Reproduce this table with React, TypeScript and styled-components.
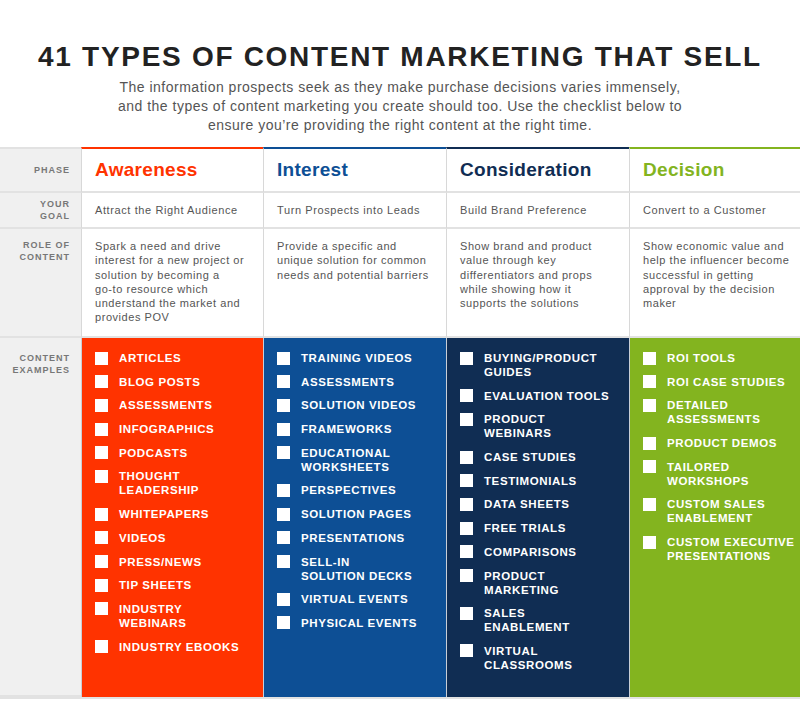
import React from 'react';
import styled, { createGlobalStyle } from 'styled-components';

const GlobalStyle = createGlobalStyle`
  html, body {
    margin: 0;
    padding: 0;
    background: #fff;
  }
  body {
    font-family: 'Liberation Sans', Arial, sans-serif;
  }
`;

// Page header

const Page = styled.div`
  width: 800px;
  height: 725px;
  overflow: hidden;
  background: #fff;
`;

const Title = styled.h1`
  margin: 0;
  padding-top: 40px;
  text-align: center;
  font-size: 28px;
  line-height: 34px;
  font-weight: 700;
  letter-spacing: 1.7px;
  color: #222;
`;

const Intro = styled.p`
  margin: 4px 0 0;
  text-align: center;
  font-size: 14px;
  line-height: 19px;
  letter-spacing: 0.5px;
  color: #555;
`;

// Table

const Table = styled.div`
  margin-top: 12px;
  display: grid;
  grid-template-columns: 81px 182px 183px 183px 1fr;
  grid-template-rows: 44px 36px 109px 359px;
  border-top: 2px solid #e2e2e2;
  border-bottom: 2px solid #e2e2e2;
`;

const Label = styled.div<{ $top?: number; $center?: boolean }>`
  background: #f0f0f0;
  border-bottom: 2px solid #e2e2e2;
  padding: ${(p) => (p.$top ?? 0)}px 11px 0 0;
  display: flex;
  flex-direction: column;
  justify-content: ${(p) => (p.$center ? 'center' : 'flex-start')};
  align-items: flex-end;
  text-align: right;
  font-size: 9px;
  line-height: 12px;
  font-weight: 700;
  letter-spacing: 1px;
  color: #777;
  &:last-of-type {
    border-bottom: none;
  }
`;

const Cell = styled.div`
  border-left: 1px solid #d8d8d8;
  border-bottom: 2px solid #e2e2e2;
  background: #fff;
`;

const PhaseCell = styled(Cell)<{ $color: string }>`
  border-top: 2px solid ${(p) => p.$color};
  margin-top: -2px;
  display: flex;
  align-items: center;
  padding-left: 13px;
  font-size: 19px;
  font-weight: 700;
  letter-spacing: 0.3px;
  color: ${(p) => p.$color};
`;

const GoalCell = styled(Cell)`
  display: flex;
  align-items: center;
  padding-left: 13px;
  font-size: 11px;
  color: #555;
  letter-spacing: 0.6px;
`;

const RoleCell = styled(Cell)`
  padding: 10px 0 0 13px;
  font-size: 11px;
  line-height: 14.3px;
  color: #555;
  letter-spacing: 0.55px;
`;

const ExamplesCell = styled.div<{ $bg: string }>`
  background: ${(p) => p.$bg};
  border-left: 1px solid #c9ced6;
  padding: 13px 0 0 13px;
  display: flex;
  flex-direction: column;
  gap: 9.7px;
`;

const Item = styled.div`
  display: flex;
  align-items: flex-start;
  gap: 11px;
`;

const Box = styled.span`
  flex: none;
  width: 13px;
  height: 13px;
  margin-top: 0.5px;
  background: #fff;
`;

const ItemText = styled.span`
  font-size: 11.5px;
  line-height: 14px;
  font-weight: 700;
  letter-spacing: 0.6px;
  color: #fff;
`;

type Phase = {
  name: string;
  color: string;
  bg: string;
  goal: string;
  role: string[];
  items: string[][];
};

const phases: Phase[] = [
  {
    name: 'Awareness',
    color: '#ff3300',
    bg: '#ff3300',
    goal: 'Attract the Right Audience',
    role: [
      'Spark a need and drive',
      'interest for a new project or',
      'solution by becoming a',
      'go-to resource which',
      'understand the market and',
      'provides POV',
    ],
    items: [
      ['ARTICLES'],
      ['BLOG POSTS'],
      ['ASSESSMENTS'],
      ['INFOGRAPHICS'],
      ['PODCASTS'],
      ['THOUGHT', 'LEADERSHIP'],
      ['WHITEPAPERS'],
      ['VIDEOS'],
      ['PRESS/NEWS'],
      ['TIP SHEETS'],
      ['INDUSTRY', 'WEBINARS'],
      ['INDUSTRY EBOOKS'],
    ],
  },
  {
    name: 'Interest',
    color: '#0d4f95',
    bg: '#0d4f95',
    goal: 'Turn Prospects into Leads',
    role: ['Provide a specific and', 'unique solution for common', 'needs and potential barriers'],
    items: [
      ['TRAINING VIDEOS'],
      ['ASSESSMENTS'],
      ['SOLUTION VIDEOS'],
      ['FRAMEWORKS'],
      ['EDUCATIONAL', 'WORKSHEETS'],
      ['PERSPECTIVES'],
      ['SOLUTION PAGES'],
      ['PRESENTATIONS'],
      ['SELL-IN', 'SOLUTION DECKS'],
      ['VIRTUAL EVENTS'],
      ['PHYSICAL EVENTS'],
    ],
  },
  {
    name: 'Consideration',
    color: '#102d53',
    bg: '#102d53',
    goal: 'Build Brand Preference',
    role: [
      'Show brand and product',
      'value through key',
      'differentiators and props',
      'while showing how it',
      'supports the solutions',
    ],
    items: [
      ['BUYING/PRODUCT', 'GUIDES'],
      ['EVALUATION TOOLS'],
      ['PRODUCT', 'WEBINARS'],
      ['CASE STUDIES'],
      ['TESTIMONIALS'],
      ['DATA SHEETS'],
      ['FREE TRIALS'],
      ['COMPARISONS'],
      ['PRODUCT', 'MARKETING'],
      ['SALES', 'ENABLEMENT'],
      ['VIRTUAL', 'CLASSROOMS'],
    ],
  },
  {
    name: 'Decision',
    color: '#83b41f',
    bg: '#83b41f',
    goal: 'Convert to a Customer',
    role: [
      'Show economic value and',
      'help the influencer become',
      'successful in getting',
      'approval by the decision',
      'maker',
    ],
    items: [
      ['ROI TOOLS'],
      ['ROI CASE STUDIES'],
      ['DETAILED', 'ASSESSMENTS'],
      ['PRODUCT DEMOS'],
      ['TAILORED', 'WORKSHOPS'],
      ['CUSTOM SALES', 'ENABLEMENT'],
      ['CUSTOM EXECUTIVE', 'PRESENTATIONS'],
    ],
  },
];

const Lines = ({ lines }: { lines: string[] }) => (
  <>
    {lines.map((l, i) => (
      <React.Fragment key={i}>
        {i > 0 && <br />}
        {l}
      </React.Fragment>
    ))}
  </>
);

const App = () => {
  return (
    <Page>
      <GlobalStyle />
      <Title>41 TYPES OF CONTENT MARKETING THAT SELL</Title>
      <Intro>
        The information prospects seek as they make purchase decisions varies immensely,
        <br />
        and the types of content marketing you create should too. Use the checklist below to
        <br />
        ensure you’re providing the right content at the right time.
      </Intro>

      <Table>
        {/* Phase row */}
        <Label $center>PHASE</Label>
        {phases.map((p) => (
          <PhaseCell key={p.name} $color={p.color}>
            {p.name}
          </PhaseCell>
        ))}

        {/* Goal row */}
        <Label $center>
          <span>YOUR</span>
          <span>GOAL</span>
        </Label>
        {phases.map((p) => (
          <GoalCell key={p.name}>{p.goal}</GoalCell>
        ))}

        {/* Role row */}
        <Label $top={10}>
          <span>ROLE OF</span>
          <span>CONTENT</span>
        </Label>
        {phases.map((p) => (
          <RoleCell key={p.name}>
            <Lines lines={p.role} />
          </RoleCell>
        ))}

        {/* Content examples */}
        <Label $top={14}>
          <span>CONTENT</span>
          <span>EXAMPLES</span>
        </Label>
        {phases.map((p) => (
          <ExamplesCell key={p.name} $bg={p.bg}>
            {p.items.map((it) => (
              <Item key={it.join(' ')}>
                <Box />
                <ItemText>
                  <Lines lines={it} />
                </ItemText>
              </Item>
            ))}
          </ExamplesCell>
        ))}
      </Table>
    </Page>
  );
};

export default App;
